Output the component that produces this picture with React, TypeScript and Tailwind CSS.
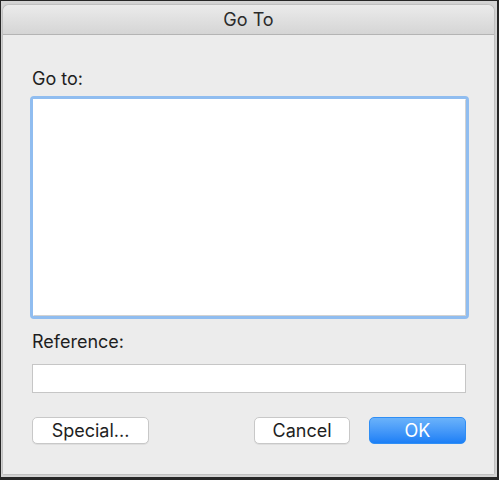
export default function App() {
  return (
    <div
      className="w-[499px] h-[480px] bg-[#262626] pl-[1px] pt-[1px] pr-[2px] pb-[3px]"
      style={{ fontFamily: 'Inter, "Noto Sans", "Liberation Sans", sans-serif' }}
    >
      <div className="w-full h-full bg-[#d4d4d4] pl-[2px] pt-[4px] pr-[3px] pb-[3px]">
        <div className="w-full h-full flex flex-col bg-[#ececec] rounded-t-[6px] overflow-hidden shadow-[0_0_2px_rgba(0,0,0,0.35)]">
          {/* title bar */}
          <div className="h-[30px] shrink-0 flex items-center justify-center bg-gradient-to-b from-[#ebebeb] to-[#d5d5d5] border-b border-[#b4b4b4]">
            <span className="text-[18px] leading-[21px] text-[#2b2b2b]">Go To</span>
          </div>

          <div className="flex flex-col pl-[27px] pr-[25px]">
            <div className="mt-[33px] h-[21px] pl-[2px] text-[18px] leading-[21px] text-[#1e1e1e]">Go to:</div>

            <div className="mt-[7px] h-[223px] border-[3px] border-[#90bdf0] rounded-[4px] bg-white">
              <div className="w-full h-full border border-[#d2d2d2] border-t-transparent border-l-transparent bg-white" />
            </div>

            <div className="mt-[12px] h-[21px] pl-[2px] text-[18px] leading-[21px] text-[#1e1e1e]">Reference:</div>

            <div className="mt-[12px] ml-[2px] mr-[3px] h-[29px] bg-white border border-[#c6c6c6]" />

            <div className="mt-[24px] ml-[2px] mr-[3px] flex items-center">
              <button className="w-[117px] h-[27px] bg-white border border-[#c8c8c8] rounded-[5px] shadow-[0_1px_0_rgba(0,0,0,0.06)] text-[18px] leading-[21px] text-[#1e1e1e]">
                Special...
              </button>
              <div className="flex-1" />
              <button className="w-[96px] h-[27px] bg-white border border-[#c8c8c8] rounded-[5px] shadow-[0_1px_0_rgba(0,0,0,0.06)] text-[18px] leading-[21px] text-[#1e1e1e]">
                Cancel
              </button>
              <button className="ml-[19px] w-[97px] h-[27px] bg-gradient-to-b from-[#6ab2fa] to-[#1a7ff6] border border-[#2f8ef5] rounded-[5px] text-[18px] leading-[21px] text-white">
                OK
              </button>
            </div>
          </div>
        </div>
      </div>
    </div>
  )
}
